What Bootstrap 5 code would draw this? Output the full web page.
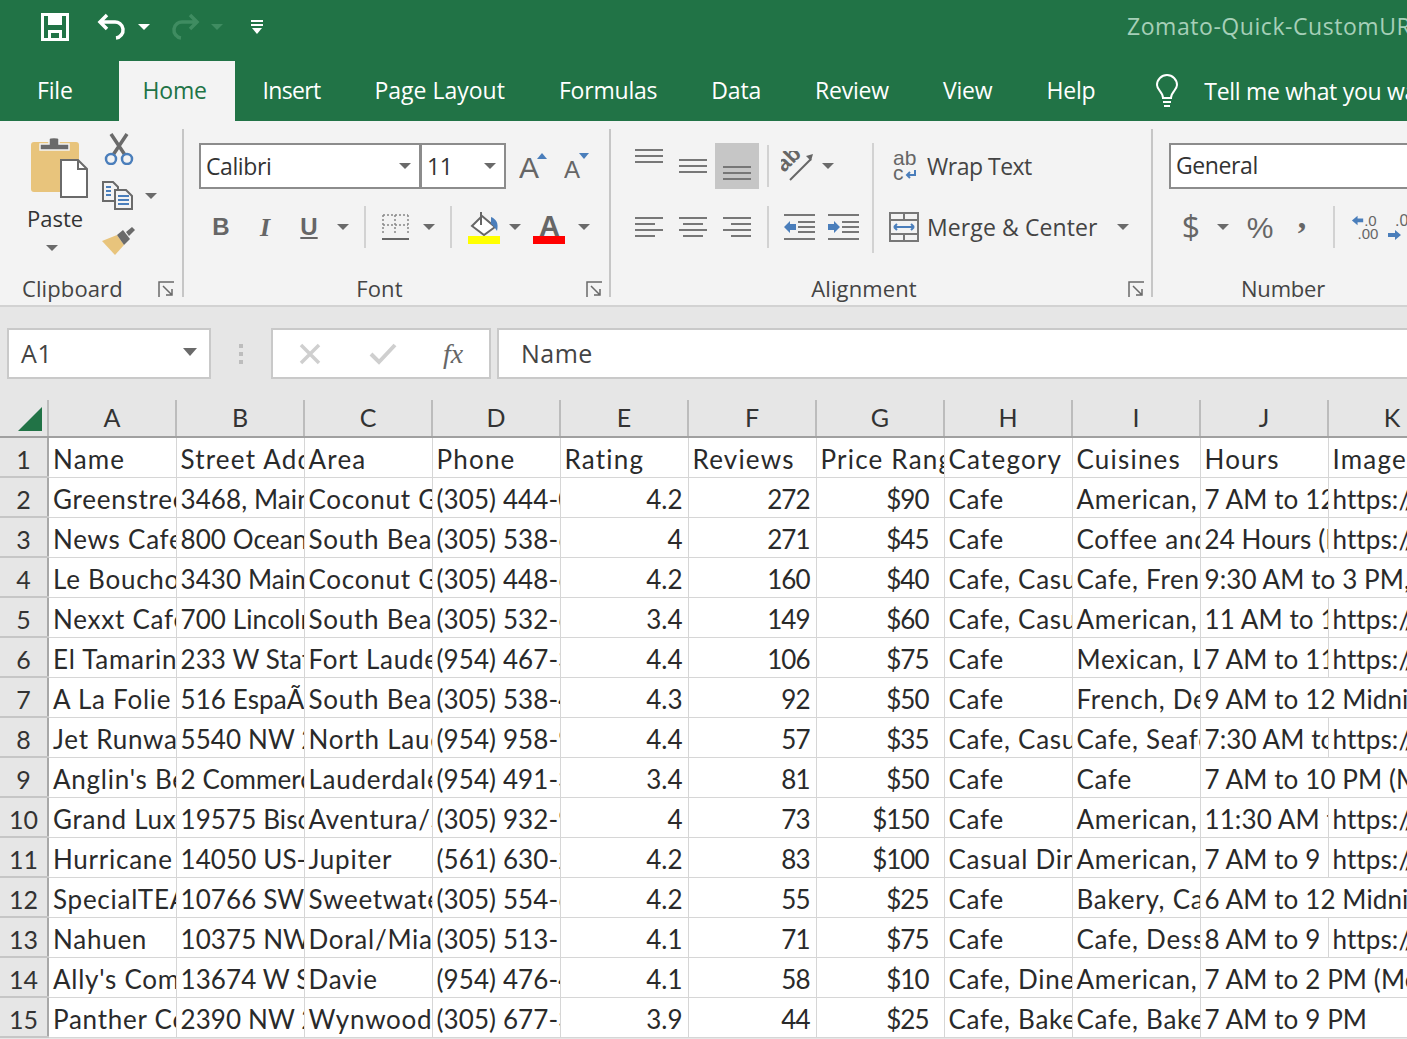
<!DOCTYPE html>
<html lang="en"><head><meta charset="utf-8"><title>Excel</title>
<link href="https://cdn.jsdelivr.net/npm/bootstrap@5.3.0/dist/css/bootstrap.min.css" rel="stylesheet">
<style>
html,body{height:1039px;overflow:hidden;background:#e6e6e6;}
body{font-family:"Open Sans","Noto Sans",sans-serif;color:#444;}
.title-bar{height:61px;background:#217346;padding:0 0 8px 41px;}
.title-bar .doc{color:#a6cfb8;font-size:23px;white-space:nowrap;letter-spacing:.55px;margin-left:auto;width:280px;overflow:hidden;}
.undo{margin-left:28px;}.q-caret{margin-left:11px;}.redo{margin-left:20px;}.more{margin-left:28px;}
.tabs{height:60px;background:#217346;padding-left:10px;}
.tabs .nav-link{color:#fff;font-size:23px;padding:0 27px;height:60px;line-height:59px;letter-spacing:-.2px;white-space:nowrap;}
.tabs .nav-link.active{background:#f3f3f3;color:#217346;width:116px;padding:0 24px;margin-left:19px;margin-right:1px;border-radius:0;}
.tabs .nav-link.ins{letter-spacing:-.7px;}
.tabs .nav-link.pg{letter-spacing:0;}
.tabs .tell{color:#fff;font-size:23px;white-space:nowrap;letter-spacing:-.3px;margin-left:24px;}
.bulb{margin-left:32px;}
.ribbon{height:186px;background:#f3f3f3;border-bottom:2px solid #d2d2d2;}
.grp{height:168px;margin-top:8px;border-right:2px solid #c6c6c6;flex:none;}
.g1{width:184px;}.g2{width:427px;}.g3{width:542px;}.g4{width:260px;border:0;}
.gbody{height:143px;}
.glabel{height:25px;font-size:22px;line-height:25px;padding-top:4px;text-align:center;position:relative;letter-spacing:.1px;white-space:nowrap;}
.launch{position:absolute;right:6px;top:9px;}
.caret{width:0;height:0;border-left:6px solid transparent;border-right:6px solid transparent;border-top:6px solid #6a6a6a;flex:none;}
.cell{flex:none;display:flex;align-items:center;justify-content:center;height:44px;}
.vsep{flex:none;width:2px;height:42px;background:#d2d2d2;}
.combo{height:46px;background:#fff;border:2px solid #8c8c8c;font-size:23px;color:#333;line-height:41px;padding-left:5px;letter-spacing:-.4px;}
.rowa{height:46px;}.rowb{height:44px;margin-top:16px;}
.clip-col{width:102px;padding-left:26px;}
.clip-col .paste{font-size:22px;line-height:28px;color:#333;padding-left:1px;margin-top:6px;}
.tool-col{width:60px;}
.wt{font-size:23px;color:#444;white-space:nowrap;}
.bi{font-family:"Liberation Sans",sans-serif;font-size:24px;color:#666;line-height:1;}
.serif{font-family:"Liberation Serif",serif;font-size:26px;}
.fbar{height:93px;background:#e6e6e6;padding:21px 0 0 7px;}
.fbox{height:51px;background:#fff;border:2px solid #c9c9c9;flex:none;}
.namebox{width:204px;font-size:25px;line-height:47px;padding-left:12px;color:#444;position:relative;letter-spacing:.6px;}
.fdots{width:60px;height:51px;flex:none;}
.fbtn{width:220px;margin-right:6px;}
.fx{font-family:"Liberation Serif",serif;font-style:italic;font-size:28px;color:#666;margin-left:46px;}
.fval{width:1000px;font-size:25px;line-height:47px;padding-left:22px;color:#444;letter-spacing:.5px;}
.sheet{table-layout:fixed;width:1456px;margin:0;font-family:"Lato","Open Sans",sans-serif;font-size:26px;color:#2a2a2a;}
.sheet>:not(caption)>*>*{padding:4px 5px 0 4px;border:1px solid #d6d6d6;white-space:nowrap;overflow:hidden;background:#fff;color:#2a2a2a;box-shadow:none;line-height:34px;letter-spacing:.75px;}
.sheet col.rh{width:48px;}.sheet col.c{width:128px;}
.sheet>thead>tr>th{height:37px;background:#e6e6e6;font-weight:400;font-size:25px;letter-spacing:0;text-align:center;border:0;border-right:2px solid #bcbcbc;border-bottom:2px solid #a0a0a0;padding:0 0 2px;color:#333;}
.sheet tbody tr{height:40px;}
.sheet>tbody>tr>th{background:#e6e6e6;font-weight:400;font-size:25px;letter-spacing:0;text-align:center;padding:5px 0 0;line-height:33px;border:0;border-right:2px solid #a8a8a8;border-bottom:2px solid #c6c6c6;color:#333;}
.sheet>tbody>tr>td:nth-child(3),.sheet>tbody>tr>td:nth-child(5),.sheet>tbody>tr>td:nth-child(11),.sheet>tbody>tr>td:nth-child(12){letter-spacing:.1px;}
.sheet>tbody>tr:first-child>td{letter-spacing:1.2px;}
.sheet>tbody>tr>td.n{text-align:right;letter-spacing:-1px;padding-right:6px;}
.sheet>tbody>tr>td.r{text-align:right;letter-spacing:0;padding-right:5px;}
.sheet>tbody>tr>td.p{text-align:right;letter-spacing:-1px;padding-right:15px;}
.corner{position:relative;}
</style></head><body class="overflow-hidden">

<div class="title-bar d-flex align-items-center">
<svg width="28" height="28" viewBox="0 0 28 28"><path fill="#fff" fill-rule="evenodd" d="M0 0H28V28H0ZM3 3V25H7V17H21V25H25V3H21V12H7V3ZM10 20V25H18V20Z"/></svg>
<svg class="undo" width="30" height="28" viewBox="0 0 30 28" fill="none" stroke="#fff" stroke-width="3.500"><path d="M10 2L3 9L10 16M3 9H17A7.500 7.500 0 0 1 19 25"/></svg>
<span class="caret q-caret" style="border-top-color:#fff"></span>
<svg class="redo" width="30" height="28" viewBox="0 0 30 28" fill="none" stroke="#3f8c61" stroke-width="3.500"><path d="M20 2L27 9L20 16M27 9H13A7.500 7.500 0 0 0 11 25"/></svg>
<span class="caret q-caret" style="border-top-color:#3f8c61"></span>
<svg class="more" width="12" height="14" viewBox="0 0 12 14" fill="#fff"><rect y="0" width="12" height="2"/><rect y="4" width="12" height="2"/><path d="M1 8H11L6 14Z"/></svg>
<span class="doc">Zomato-Quick-CustomURL-Export</span>
</div>

<ul class="nav tabs flex-nowrap align-items-start">
<li class="nav-item"><a class="nav-link" href="#">File</a></li>
<li class="nav-item"><a class="nav-link active" href="#">Home</a></li>
<li class="nav-item"><a class="nav-link ins" href="#">Insert</a></li>
<li class="nav-item"><a class="nav-link pg" href="#">Page Layout</a></li>
<li class="nav-item"><a class="nav-link" href="#">Formulas</a></li>
<li class="nav-item"><a class="nav-link" href="#">Data</a></li>
<li class="nav-item"><a class="nav-link" href="#">Review</a></li>
<li class="nav-item"><a class="nav-link" href="#">View</a></li>
<li class="nav-item"><a class="nav-link" href="#">Help</a></li>
<li class="nav-item d-flex align-items-center" style="height:60px">
<svg class="bulb" width="26" height="34" viewBox="0 0 26 34" fill="none" stroke="#fff" stroke-width="2"><path d="M9 24C9 18 3 16 3 11A10 10 0 0 1 23 11C23 16 17 18 17 24ZM9 28H17M10 32H16"/></svg>
<span class="tell">Tell me what you want to do</span></li>
</ul>

<div class="ribbon d-flex">
<!-- Clipboard -->
<div class="grp g1">
<div class="gbody d-flex">
<div class="clip-col">
<svg width="62" height="62" viewBox="0 0 62 62" class="d-block" style="margin-top:7px"><rect x="5" y="6" width="48" height="50" rx="3" fill="#e8c47c"/><path d="M14 14V8H23V3C23 1 33 1 33 3V8H43V14Z" fill="#6a6a6a" stroke="#f3f3f3" stroke-width="1.500"/><path d="M35 24H52L61 33V61H35Z" fill="#fff" stroke="#6a6a6a" stroke-width="2"/><path d="M52 24V33H61" fill="none" stroke="#6a6a6a" stroke-width="2"/></svg>
<div class="paste">Paste</div>
<span class="caret d-block" style="margin:13px 0 0 20px"></span>
</div>
<div class="tool-col d-flex flex-column" style="padding-top:4px">
<svg width="30" height="32" viewBox="0 0 30 32" fill="none" class="d-block" style="margin-left:2px"><path d="M7 1L21 22M23 1L9 22" stroke="#6a6a6a" stroke-width="3.500"/><circle cx="7" cy="26" r="5" stroke="#4a7ebb" stroke-width="2.500"/><circle cx="23" cy="26" r="5" stroke="#4a7ebb" stroke-width="2.500"/></svg>
<div class="d-flex align-items-center" style="margin-top:16px">
<svg width="31" height="29" viewBox="0 0 31 29" fill="none" stroke="#6a6a6a" stroke-width="2"><path d="M12 20H1V1H11L16 6V9"/><path d="M13 9H24L30 15V28H13Z" fill="#f3f3f3"/><path d="M16 15H27M16 19H27M16 23H27" stroke="#4a7ebb"/><path d="M4 6H9M4 10H9M4 14H9" stroke="#4a7ebb"/></svg>
<span class="caret" style="margin-left:12px"></span>
</div>
<svg width="34" height="30" viewBox="0 0 34 30" class="d-block" style="margin-top:17px"><path d="M0 14L15 8L22 18L13 28Z" fill="#e8c47c"/><path d="M15 8L22 18L28 12L21 3Z" fill="#6a6a6a"/><path d="M24 5L30 0L33 3L27 9Z" fill="#6a6a6a"/></svg>
</div>
</div>
<div class="glabel text-start" style="padding-left:22px">Clipboard
<svg class="launch" style="right:7px" width="17" height="17" viewBox="0 0 17 17" fill="none" stroke="#6a6a6a" stroke-width="1.500"><path d="M16 1H1V16M5 5L14 14M14 8V14H8"/></svg></div>
</div>

<!-- Font -->
<div class="grp g2">
<div class="gbody" style="padding:14px 0 0 15px">
<div class="rowa d-flex align-items-center">
<div class="combo d-flex align-items-center justify-content-between" style="width:222px;padding-right:8px">Calibri<span class="caret"></span></div>
<div class="combo d-flex align-items-center justify-content-between" style="width:86px;margin-left:-1px;padding-right:8px">11<span class="caret"></span></div>
<svg style="margin-left:13px" width="30" height="28" viewBox="0 0 30 28"><text x="0" y="26" font-family="Liberation Sans" font-size="30" fill="#666">A</text><path d="M18 7L23 1L28 7Z" fill="#4a7ebb"/></svg>
<svg style="margin-left:15px" width="26" height="28" viewBox="0 0 26 28"><text x="0" y="26" font-family="Liberation Sans" font-size="24" fill="#666">A</text><path d="M15 1H25L20 7Z" fill="#4a7ebb"/></svg>
</div>
<div class="rowb d-flex align-items-center">
<div class="cell bi fw-bold" style="width:44px">B</div>
<div class="cell serif fst-italic fw-bold" style="width:44px;color:#666">I</div>
<div class="cell bi fw-bold" style="width:44px"><span class="text-decoration-underline">U</span></div>
<div class="cell" style="width:24px"><span class="caret"></span></div>
<div class="cell" style="width:20px"><span class="vsep"></span></div>
<div class="cell" style="width:40px"><svg width="27" height="26" viewBox="0 0 27 26" fill="none" stroke="#888" stroke-width="2"><path d="M1 1H26M1 11H26M1 1V21M13 1V21M26 1V21" stroke-dasharray="2 2" stroke-width="1.500"/><path d="M0 25H27" stroke="#666"/></svg></div>
<div class="cell" style="width:28px"><span class="caret"></span></div>
<div class="cell" style="width:16px"><span class="vsep"></span></div>
<div class="cell" style="width:48px"><svg width="33" height="33" viewBox="0 0 33 33"><path d="M15 5L28 16L17 24L5 15Z" fill="#fff" stroke="#666" stroke-width="2"/><path d="M14 1V14" stroke="#666" stroke-width="2"/><path d="M24 6C29 8 32 12 30 20C28 17 26 14 24 13Z" fill="#4a7ebb"/><rect x="1" y="25" width="32" height="8" fill="#ff0"/></svg></div>
<div class="cell" style="width:15px"><span class="caret"></span></div>
<div class="cell" style="width:53px"><svg width="32" height="33" viewBox="0 0 32 33"><text x="6" y="25" font-family="Liberation Sans" font-size="29" font-weight="700" fill="#666">A</text><rect x="0" y="25" width="32" height="8" fill="#f00"/></svg></div>
<div class="cell" style="width:18px"><span class="caret"></span></div>
</div>
</div>
<div class="glabel" style="padding-right:34px">Font
<svg class="launch" width="17" height="17" viewBox="0 0 17 17" fill="none" stroke="#6a6a6a" stroke-width="1.500"><path d="M16 1H1V16M5 5L14 14M14 8V14H8"/></svg></div>
</div>

<!-- Alignment -->
<div class="grp g3">
<div class="gbody d-flex" style="padding:14px 0 0 16px">
<div style="width:245px">
<div class="rowa d-flex">
<div class="cell" style="width:44px;height:46px;align-items:flex-start;padding-top:6px"><svg width="28" height="14" viewBox="0 0 28 14" stroke="#777" stroke-width="2"><path d="M0 1H28M0 7H28M0 13H28"/></svg></div>
<div class="cell" style="width:44px;height:46px;padding-top:0"><svg width="28" height="14" viewBox="0 0 28 14" stroke="#777" stroke-width="2"><path d="M0 1H28M0 7H28M0 13H28"/></svg></div>
<div class="cell" style="width:44px;height:46px;background:#c6c6c6;align-items:flex-end;padding-bottom:9px"><svg width="28" height="14" viewBox="0 0 28 14" stroke="#777" stroke-width="2"><path d="M0 1H28M0 7H28M0 13H28"/></svg></div>
<div class="cell" style="width:18px;height:46px"><span class="vsep"></span></div>
<div class="cell" style="width:41px;height:46px"><svg width="34" height="30" viewBox="0 0 34 30"><text x="0" y="0" transform="translate(3 22) rotate(-45)" font-family="Liberation Sans" font-size="22" font-weight="700" fill="#666">ab</text><path d="M9 29L30 8" stroke="#666" stroke-width="2"/><path d="M25 5L32 3L30 10Z" fill="#666"/></svg></div>
<div class="cell" style="width:20px;height:46px"><span class="caret"></span></div>
</div>
<div class="rowb d-flex">
<div class="cell" style="width:44px"><svg width="28" height="20" viewBox="0 0 28 20" stroke="#777" stroke-width="2"><path d="M0 1H28M0 7H20M0 13H28M0 19H20"/></svg></div>
<div class="cell" style="width:44px"><svg width="28" height="20" viewBox="0 0 28 20" stroke="#777" stroke-width="2"><path d="M0 1H28M4 7H24M0 13H28M4 19H24"/></svg></div>
<div class="cell" style="width:44px"><svg width="28" height="20" viewBox="0 0 28 20" stroke="#777" stroke-width="2"><path d="M0 1H28M8 7H28M0 13H28M8 19H28"/></svg></div>
<div class="cell" style="width:18px"><span class="vsep"></span></div>
<div class="cell" style="width:44px"><svg width="33" height="26" viewBox="0 0 33 26"><path d="M1 1H32M1 25H32M15 8H32M15 13H32M15 18H32" stroke="#777" stroke-width="2"/><path d="M1 13L7 7V10H13V16H7V19Z" fill="#4a7ebb"/></svg></div>
<div class="cell" style="width:44px"><svg width="33" height="26" viewBox="0 0 33 26"><path d="M1 1H32M1 25H32M15 8H32M15 13H32M15 18H32" stroke="#777" stroke-width="2"/><path d="M13 13L7 7V10H1V16H7V19Z" fill="#4a7ebb"/></svg></div>
</div>
</div>
<div class="vsep" style="height:110px;margin-right:15px"></div>
<div>
<div class="d-flex align-items-center rowa">
<svg style="margin-left:4px" width="26" height="30" viewBox="0 0 26 30"><text x="0" y="14" font-family="Liberation Sans" font-size="21" fill="#666">ab</text><text x="0" y="29" font-family="Liberation Sans" font-size="21" fill="#666">c</text><path d="M22 19V24H14M17 21L14 24L17 27" fill="none" stroke="#4a7ebb" stroke-width="2"/></svg>
<span class="wt" style="margin-left:8px;letter-spacing:-.5px">Wrap Text</span></div>
<div class="d-flex align-items-center rowb">
<svg width="30" height="30" viewBox="0 0 30 30" fill="none" stroke="#777" stroke-width="2"><rect x="1" y="1" width="28" height="28"/><path d="M1 8H29M1 22H29M15 1V8M15 22V29"/><path d="M5 15H25M5 15L8 12M5 15L8 18M25 15L22 12M25 15L22 18" stroke="#4a7ebb"/></svg>
<span class="wt" style="margin-left:8px;letter-spacing:.1px">Merge &amp; Center</span><span class="caret" style="margin-left:19px"></span></div>
</div>
</div>
<div class="glabel" style="padding-right:34px">Alignment
<svg class="launch" width="17" height="17" viewBox="0 0 17 17" fill="none" stroke="#6a6a6a" stroke-width="1.500"><path d="M16 1H1V16M5 5L14 14M14 8V14H8"/></svg></div>
</div>

<!-- Number -->
<div class="grp g4">
<div class="gbody" style="padding:14px 0 0 16px">
<div class="combo" style="width:260px">General</div>
<div class="rowb d-flex align-items-center">
<div class="cell" style="width:44px;font-size:32px;color:#666">$</div>
<div class="cell" style="width:20px"><span class="caret"></span></div>
<div class="cell" style="width:54px;font-size:30px;color:#666;font-family:'Liberation Sans',sans-serif">%</div>
<div class="cell fw-bold serif" style="width:30px;color:#666;padding-bottom:22px;font-size:34px">,</div>
<div class="cell" style="width:34px"><span class="vsep"></span></div>
<div class="cell" style="width:30px"><svg width="32" height="28" viewBox="0 0 32 28" class="flex-none"><text x="14" y="13" font-family="Liberation Sans" font-size="16" fill="#666">.0</text><text x="7" y="27" font-family="Liberation Sans" font-size="16" fill="#666">.00</text><path d="M1 7L7 2V5H13V9H7V12Z" fill="#4a7ebb"/></svg></div>
<div class="cell" style="width:44px"><svg width="32" height="28" viewBox="0 0 32 28"><text x="8" y="13" font-family="Liberation Sans" font-size="16" fill="#666">.00</text><path d="M14 22L8 17V20H1V24H8V27Z" fill="#4a7ebb"/></svg></div>
</div>
</div>
<div class="glabel" style="text-align:left;padding-left:88px;letter-spacing:-.2px">Number</div>
</div>
</div>

<div class="fbar d-flex">
<div class="fbox namebox">A1<span class="caret position-absolute" style="right:12px;top:18px;border-width:8px 7px 0"></span></div>
<div class="fdots d-flex align-items-center justify-content-center"><svg width="6" height="20" viewBox="0 0 6 20" fill="#bdbdbd"><rect y="0" x="1" width="4" height="4"/><rect y="8" x="1" width="4" height="4"/><rect y="16" x="1" width="4" height="4"/></svg></div>
<div class="fbox fbtn d-flex align-items-center">
<svg style="margin-left:26px" width="22" height="22" viewBox="0 0 22 22" stroke="#cfcfcf" stroke-width="3.500"><path d="M2 2L20 20M20 2L2 20"/></svg>
<svg style="margin-left:48px" width="28" height="22" viewBox="0 0 28 22" fill="none" stroke="#cfcfcf" stroke-width="4"><path d="M2 11L10 19L26 2"/></svg>
<span class="fx">fx</span>
</div>
<div class="fbox fval">Name</div>
</div>

<div class="overflow-hidden">
<table class="table sheet">
<colgroup><col class="rh"><col class="c"><col class="c"><col class="c"><col class="c"><col class="c"><col class="c"><col class="c"><col class="c"><col class="c"><col class="c"><col class="c"></colgroup>
<thead><tr><th class="corner"><svg class="position-absolute" style="left:18px;top:7px" width="24" height="24" viewBox="0 0 24 24"><path d="M24 0V24H0Z" fill="#217346"/></svg></th><th>A</th><th>B</th><th>C</th><th>D</th><th>E</th><th>F</th><th>G</th><th>H</th><th>I</th><th>J</th><th>K</th></tr></thead>
<tbody>
<tr><th>1</th><td>Name</td><td>Street Address</td><td>Area</td><td>Phone</td><td>Rating</td><td>Reviews</td><td>Price Range</td><td>Category</td><td>Cuisines</td><td>Hours</td><td>Image URL</td></tr>
<tr><th>2</th><td>Greenstreet Cafe</td><td>3468, Main Highway</td><td>Coconut Grove</td><td>(305) 444-0226</td><td class="r">4.2</td><td class="n">272</td><td class="p">$90</td><td>Cafe</td><td>American, Cafe</td><td>7 AM to 12 Midnight</td><td>https://b.zmtcdn</td></tr>
<tr><th>3</th><td>News Cafe</td><td>800 Ocean Drive</td><td>South Beach</td><td>(305) 538-6397</td><td class="r">4</td><td class="n">271</td><td class="p">$45</td><td>Cafe</td><td>Coffee and Tea</td><td>24 Hours (Mon)</td><td>https://b.zmtcdn</td></tr>
<tr><th>4</th><td>Le Bouchon</td><td>3430 Main Hwy</td><td>Coconut Grove</td><td>(305) 448-6060</td><td class="r">4.2</td><td class="n">160</td><td class="p">$40</td><td>Cafe, Casual Dining</td><td>Cafe, French</td><td colspan="2">9:30 AM to 3 PM, 5:30 PM</td></tr>
<tr><th>5</th><td>Nexxt Cafe</td><td>700 Lincoln Road</td><td>South Beach</td><td>(305) 532-6643</td><td class="r">3.4</td><td class="n">149</td><td class="p">$60</td><td>Cafe, Casual Dining</td><td>American, Cafe</td><td>11 AM to 12 Midnight</td><td>https://b.zmtcdn</td></tr>
<tr><th>6</th><td>El Tamarindo</td><td>233 W State Road</td><td>Fort Lauderdale</td><td>(954) 467-3030</td><td class="r">4.4</td><td class="n">106</td><td class="p">$75</td><td>Cafe</td><td>Mexican, Latin</td><td>7 AM to 11 PM</td><td>https://b.zmtcdn</td></tr>
<tr><th>7</th><td>A La Folie</td><td>516 EspaÃ±ola Way</td><td>South Beach</td><td>(305) 538-4484</td><td class="r">4.3</td><td class="n">92</td><td class="p">$50</td><td>Cafe</td><td>French, Desserts</td><td colspan="2">9 AM to 12 Midnight (Mon)</td></tr>
<tr><th>8</th><td>Jet Runway Cafe</td><td>5540 NW 23rd</td><td>North Lauderdale</td><td>(954) 958-9900</td><td class="r">4.4</td><td class="n">57</td><td class="p">$35</td><td>Cafe, Casual Dining</td><td>Cafe, Seafood</td><td>7:30 AM to 3 PM</td><td>https://b.zmtcdn</td></tr>
<tr><th>9</th><td>Anglin's Beach Cafe</td><td>2 Commercial</td><td>Lauderdale</td><td>(954) 491-3190</td><td class="r">3.4</td><td class="n">81</td><td class="p">$50</td><td>Cafe</td><td>Cafe</td><td colspan="2">7 AM to 10 PM (Mon-Sun)</td></tr>
<tr><th>10</th><td>Grand Lux Cafe</td><td>19575 Biscayne</td><td>Aventura/Sunny</td><td>(305) 932-9113</td><td class="r">4</td><td class="n">73</td><td class="p">$150</td><td>Cafe</td><td>American, Cafe</td><td>11:30 AM to 11 PM</td><td>https://b.zmtcdn</td></tr>
<tr><th>11</th><td>Hurricane Grill</td><td>14050 US-1 Hwy</td><td>Jupiter</td><td>(561) 630-2012</td><td class="r">4.2</td><td class="n">83</td><td class="p">$100</td><td>Casual Dining</td><td>American, Seafood</td><td>7 AM to 9</td><td>https://b.zmtcdn</td></tr>
<tr><th>12</th><td>SpecialTEA Lounge</td><td>10766 SW</td><td>Sweetwater</td><td>(305) 554-6000</td><td class="r">4.2</td><td class="n">55</td><td class="p">$25</td><td>Cafe</td><td>Bakery, Cafe</td><td colspan="2">6 AM to 12 Midnight (Mon)</td></tr>
<tr><th>13</th><td>Nahuen</td><td>10375 NW</td><td>Doral/Miami</td><td>(305) 513-1111</td><td class="r">4.1</td><td class="n">71</td><td class="p">$75</td><td>Cafe</td><td>Cafe, Desserts</td><td>8 AM to 9</td><td>https://b.zmtcdn</td></tr>
<tr><th>14</th><td>Ally's Community</td><td>13674 W State</td><td>Davie</td><td>(954) 476-4444</td><td class="r">4.1</td><td class="n">58</td><td class="p">$10</td><td>Cafe, Diner</td><td>American, Cafe</td><td colspan="2">7 AM to 2 PM (Mon-Sun)</td></tr>
<tr><th>15</th><td>Panther Coffee</td><td>2390 NW 2nd Ave</td><td>Wynwood</td><td>(305) 677-3952</td><td class="r">3.9</td><td class="n">44</td><td class="p">$25</td><td>Cafe, Bakery</td><td>Cafe, Bakery</td><td colspan="2">7 AM to 9 PM</td></tr>
</tbody></table>
</div>
<script src="https://cdn.jsdelivr.net/npm/bootstrap@5.3.0/dist/js/bootstrap.bundle.min.js"></script>
</body></html>
